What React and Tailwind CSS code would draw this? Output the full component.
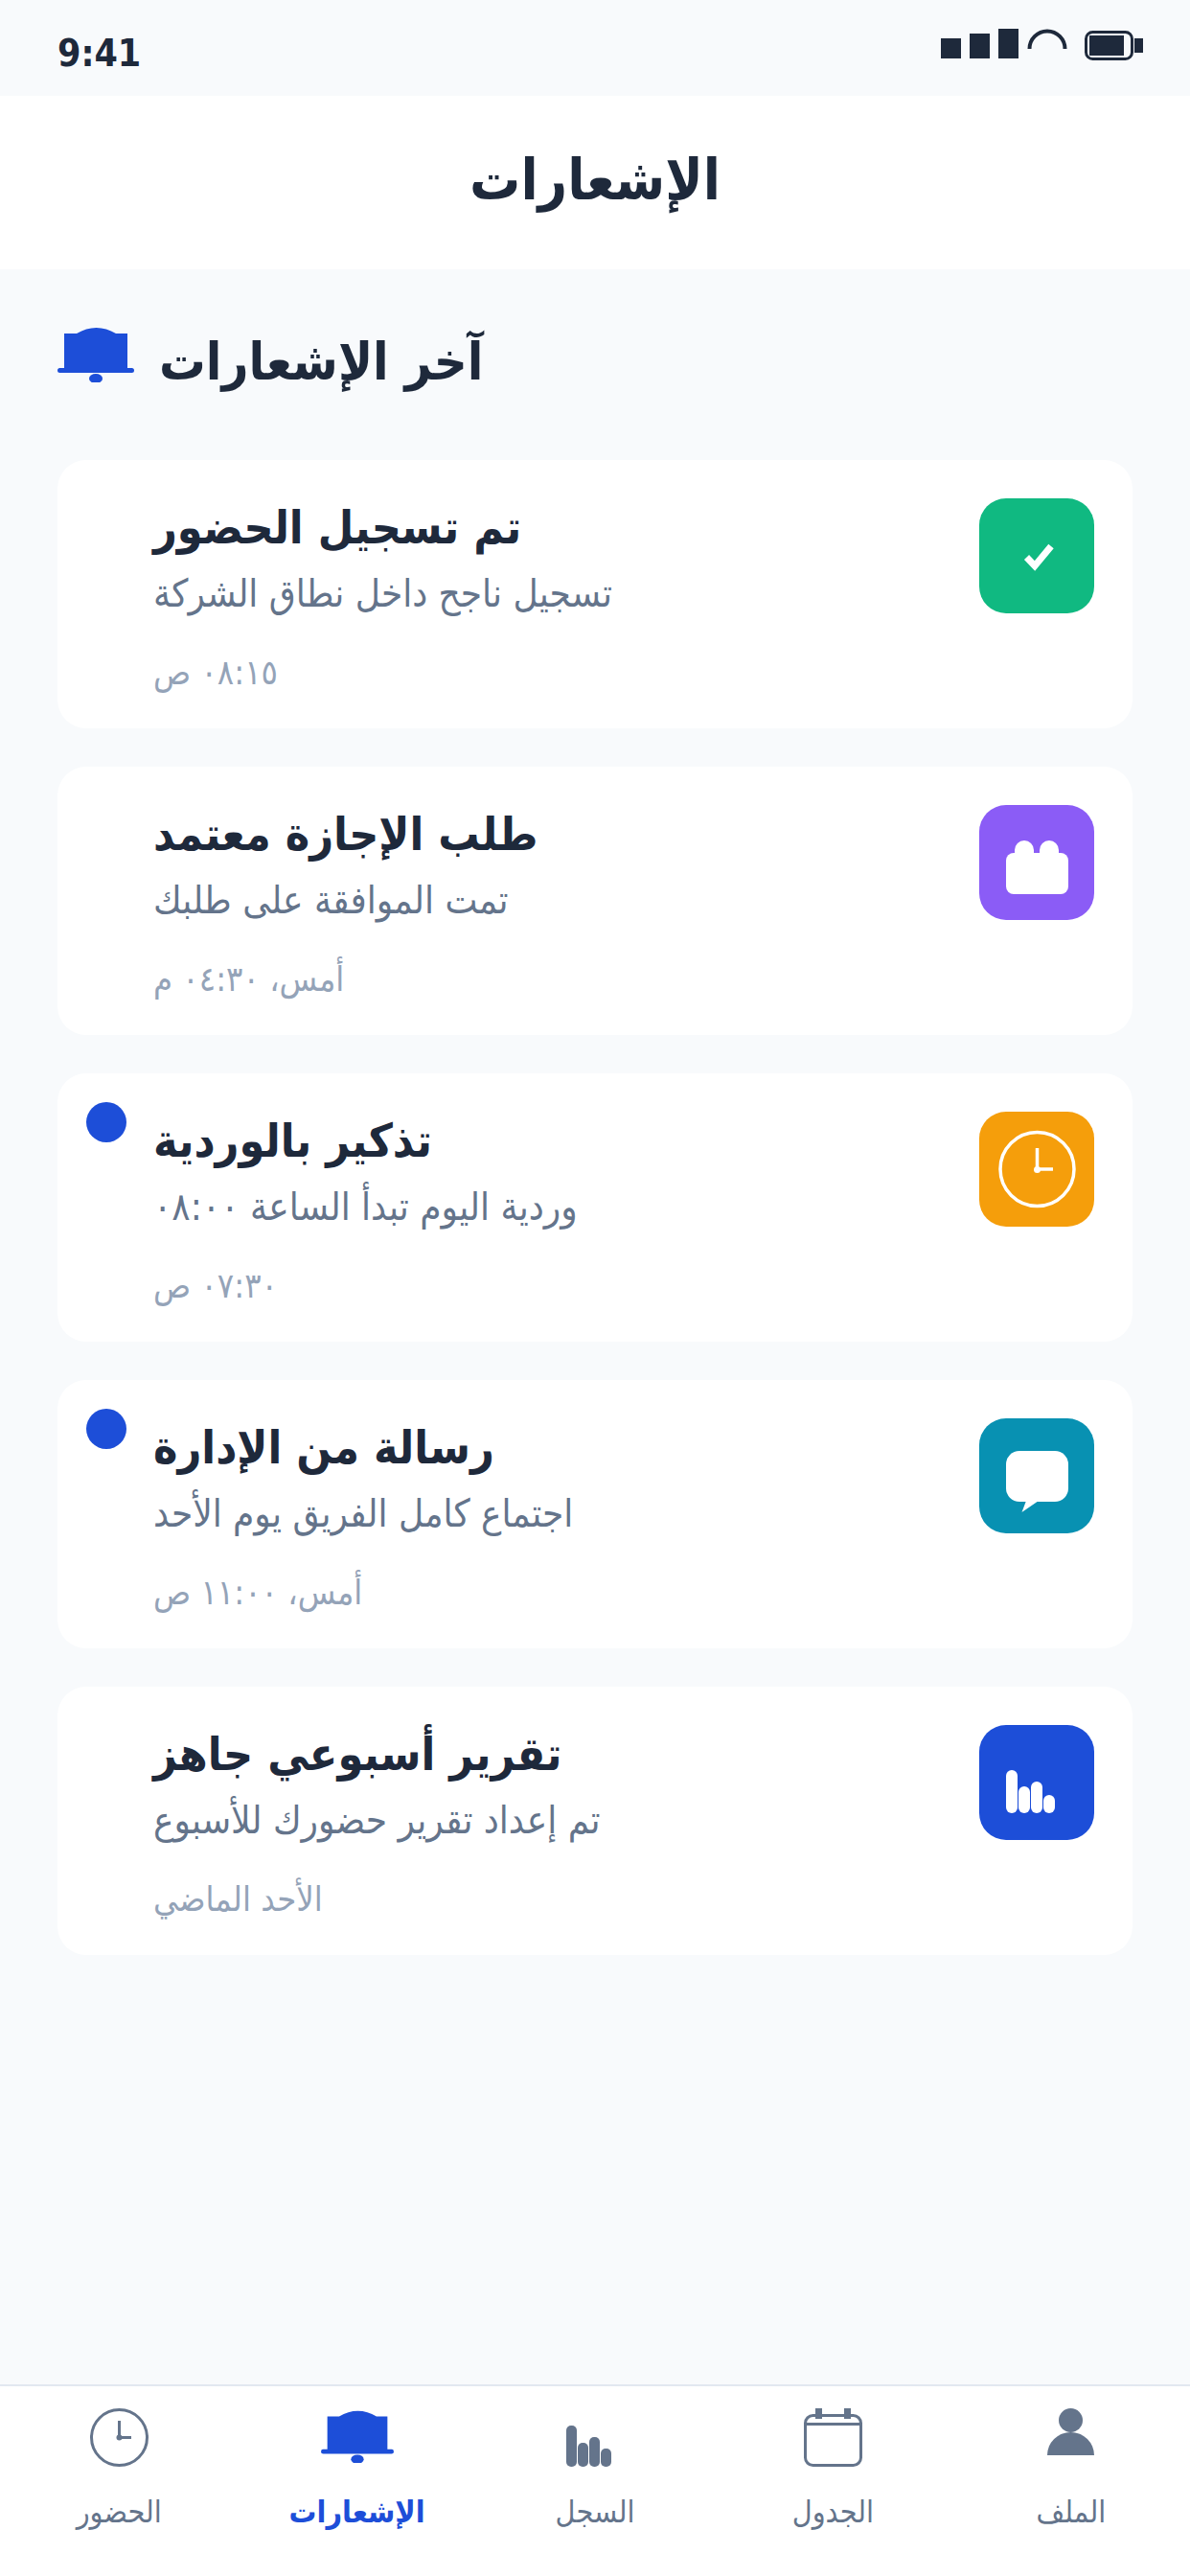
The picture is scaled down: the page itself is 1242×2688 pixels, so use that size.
import React from 'react';

const Bell = ({ className }) => (
  <svg viewBox="0 0 80 60" className={className} fill="#1d4ed8">
    <path d="M7 9H20Q30 3 40.5 3T61 9H73V45H77.5a2.5 2.5 0 0 1 0 5H2.5a2.5 2.5 0 0 1 0-5H7Z" />
    <ellipse cx="40" cy="56" rx="7" ry="5" />
  </svg>
);

const TileIcon = ({ type }) => {
  if (type === 'check') {
    return (
      <svg viewBox="0 0 120 120" className="w-full h-full" fill="none" stroke="#fff" strokeWidth="7">
        <path d="M49.5 61.5L58 70.5L75 50" />
      </svg>
    );
  }
  if (type === 'briefcase') {
    return (
      <svg viewBox="0 0 120 120" className="w-full h-full" fill="#fff">
        <rect x="28" y="50" width="65" height="43" rx="8" />
        <circle cx="47" cy="47" r="10" />
        <circle cx="73" cy="47" r="10" />
        <rect x="37" y="47" width="20" height="6" />
        <rect x="63" y="47" width="20" height="6" />
      </svg>
    );
  }
  if (type === 'clock') {
    return (
      <svg viewBox="0 0 120 120" className="w-full h-full" fill="none" stroke="#fff" strokeWidth="3.5">
        <circle cx="60.5" cy="60" r="38.5" />
        <path d="M60.5 38V60H77" />
        <circle cx="60.5" cy="60.5" r="3.5" fill="#fff" stroke="none" />
      </svg>
    );
  }
  if (type === 'chat') {
    return (
      <svg viewBox="0 0 120 120" className="w-full h-full" fill="#fff">
        <rect x="28" y="34" width="65" height="53" rx="14" />
        <path d="M49 86L44.5 98L62 86Z" />
      </svg>
    );
  }
  return (
    <svg viewBox="0 0 120 120" className="w-full h-full" fill="#fff">
      <rect x="28" y="47" width="12" height="45" rx="6" />
      <rect x="41" y="64" width="12" height="28" rx="6" />
      <rect x="54" y="59" width="12" height="33" rx="6" />
      <rect x="67" y="73" width="12" height="19" rx="6" />
    </svg>
  );
};

const notifications = [
  { title: 'تم تسجيل الحضور', body: 'تسجيل ناجح داخل نطاق الشركة', time: '٠٨:١٥ ص', icon: 'check', color: 'bg-[#10b981]' },
  { title: 'طلب الإجازة معتمد', body: 'تمت الموافقة على طلبك', time: 'أمس، ٠٤:٣٠ م', icon: 'briefcase', color: 'bg-[#8b5cf6]' },
  { title: 'تذكير بالوردية', body: 'وردية اليوم تبدأ الساعة ٠٨:٠٠', time: '٠٧:٣٠ ص', icon: 'clock', color: 'bg-[#f59e0b]', unread: true },
  { title: 'رسالة من الإدارة', body: 'اجتماع كامل الفريق يوم الأحد', time: 'أمس، ١١:٠٠ ص', icon: 'chat', color: 'bg-[#0891b2]', unread: true },
  { title: 'تقرير أسبوعي جاهز', body: 'تم إعداد تقرير حضورك للأسبوع', time: 'الأحد الماضي', icon: 'bars', color: 'bg-[#1d4ed8]' },
];

const NavItem = ({ label, active, children }) => (
  <div className="flex-1 flex flex-col items-center">
    <div className="h-[61px] flex items-start justify-center">{children}</div>
    <span
      dir="rtl"
      className={`mt-[25px] text-[32px] leading-[45px] ${active ? 'font-bold text-[#1d4ed8]' : 'text-[#64748b]'}`}
    >
      {label}
    </span>
  </div>
);

const App = () => {
  return (
    <div className="w-[1242px] h-[2688px] flex flex-col bg-[#f8fafc] font-['DejaVu_Sans_Condensed',sans-serif] overflow-hidden">
      {/* status bar */}
      <div className="h-[100px] flex justify-between items-start pl-[60px] pr-[49px]">
        <span className="mt-[33px] text-[39px] leading-[46px] font-bold text-[#1e293b]">9:41</span>
        <svg viewBox="0 0 211 36" className="w-[211px] h-[36px] mt-[29px]" fill="#1e293b">
          <rect x="0" y="11" width="21" height="21" />
          <rect x="30" y="6" width="21" height="26" />
          <rect x="60" y="1" width="21" height="31" />
          <path d="M92.5 22a18.5 18.5 0 0 1 37 0" fill="none" stroke="#1e293b" strokeWidth="4" />
          <rect x="151.5" y="4.5" width="48" height="28" rx="7" fill="none" stroke="#1e293b" strokeWidth="3" />
          <rect x="155" y="8" width="36" height="21" />
          <rect x="202" y="11" width="9" height="15" />
        </svg>
      </div>

      {/* header */}
      <div className="h-[181px] bg-white flex items-center justify-center">
        <h1 dir="rtl" className="text-[59px] leading-[80px] mb-[6px] font-bold text-[#1e293b]">الإشعارات</h1>
      </div>

      {/* section title */}
      <div className="h-[199px] flex items-start pl-[60px] pt-[58px] gap-[26px]">
        <Bell className="w-[80px] h-[60px]" />
        <h2 dir="rtl" className="text-[54px] leading-[72px] mt-[3px] font-bold text-[#1e293b]">آخر الإشعارات</h2>
      </div>

      {/* list */}
      <div className="flex flex-col gap-[40px] px-[60px]">
        {notifications.map((item) => (
          <div key={item.title} className="relative h-[280px] bg-white rounded-[30px] p-[40px] flex justify-between items-start">
            {item.unread && <span className="absolute left-[30px] top-[30px] w-[42px] h-[42px] rounded-full bg-[#1d4ed8]" />}
            <div dir="rtl" className="pl-[60px] text-left">
              <div className="text-[48px] leading-[60px] font-bold text-[#1e293b]">{item.title}</div>
              <div className="mt-[12px] text-[40px] leading-[54px] text-[#64748b]">{item.body}</div>
              <div className="mt-[32px] text-[36px] leading-[48px] text-[#94a3b8]">{item.time}</div>
            </div>
            <div className={`w-[120px] h-[120px] rounded-[28px] shrink-0 ${item.color}`}>
              <TileIcon type={item.icon} />
            </div>
          </div>
        ))}
      </div>

      {/* bottom nav */}
      <div className="mt-auto h-[200px] bg-white border-t-2 border-[#e2e8f0] pt-[23px] flex">
        <NavItem label="الحضور">
          <svg viewBox="0 0 61 61" className="w-[61px] h-[61px]" fill="none" stroke="#64748b" strokeWidth="3">
            <circle cx="30.5" cy="30.5" r="29" />
            <path d="M30.5 13V30.5H43" />
            <circle cx="30.5" cy="30.5" r="3" fill="#64748b" stroke="none" />
          </svg>
        </NavItem>
        <NavItem label="الإشعارات" active>
          <Bell className="w-[76px] h-[57px]" />
        </NavItem>
        <NavItem label="السجل">
          <svg viewBox="0 0 61 61" className="w-[61px] h-[61px]" fill="#64748b">
            <rect x="0" y="18" width="11" height="43" rx="5" />
            <rect x="12" y="36" width="11" height="25" rx="5" />
            <rect x="24" y="30" width="11" height="31" rx="5" />
            <rect x="36" y="42" width="11" height="19" rx="5" />
          </svg>
        </NavItem>
        <NavItem label="الجدول">
          <svg viewBox="0 0 61 61" className="w-[61px] h-[61px]" fill="none" stroke="#64748b" strokeWidth="3">
            <rect x="1.5" y="7.5" width="58" height="52" rx="8" />
            <path d="M1.5 16.5H59.5" />
            <rect x="12" y="0" width="7" height="11" fill="#64748b" stroke="none" />
            <rect x="42" y="0" width="7" height="11" fill="#64748b" stroke="none" />
          </svg>
        </NavItem>
        <NavItem label="الملف">
          <svg viewBox="0 0 49 49" className="w-[49px] h-[49px]" fill="#64748b">
            <circle cx="24.5" cy="12.5" r="12.5" />
            <path d="M0 49a24.5 24 0 0 1 49 0Z" />
          </svg>
        </NavItem>
      </div>
    </div>
  );
};

export default App;
